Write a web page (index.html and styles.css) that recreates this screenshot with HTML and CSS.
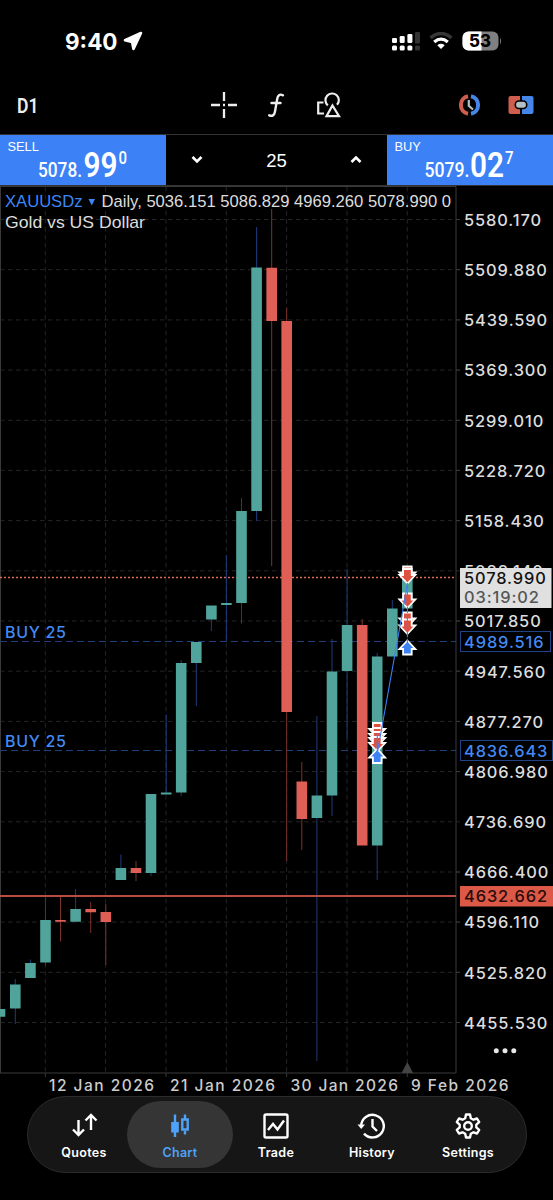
FILE: index.html
```html
<!DOCTYPE html>
<html lang="en">

<head>
    <meta charset="UTF-8">
    <meta name="viewport" content="width=device-width, initial-scale=1.0">
    <title>XAUUSDz Chart</title>
    <link rel="stylesheet" href="styles.css">
</head>

<body>
    <div class="app">
        <div class="status-bar">
            <span class="clock">9:40</span>
            <svg class="location" width="20" height="20" viewBox="0 0 20 20"><path d="M18 2 10.500 18 9 11 2 9.300Z" fill="#fff" stroke="#fff" stroke-width="2.600" stroke-linejoin="round"/></svg>
            <svg class="signal" width="29" height="20" viewBox="0 0 29 20">
                <g fill="#fff">
                    <rect x="0" y="7" width="5" height="5" rx="1.3"/><rect x="7.7" y="5" width="5" height="7" rx="1.3"/><rect x="15.4" y="3" width="5" height="9" rx="1.3"/>
                    <rect x="0" y="14.6" width="5" height="5" rx="1.5"/><rect x="7.7" y="14.6" width="5" height="5" rx="1.5"/><rect x="15.4" y="14.6" width="5" height="5" rx="1.5"/>
                </g>
                <g fill="#333"><rect x="23" y="1" width="5" height="11.500" rx="1.3"/><rect x="23" y="14.6" width="5" height="5" rx="1.5"/></g>
            </svg>
            <svg class="wifi" width="24" height="18" viewBox="0 0 24 18" fill="none">
                <path d="M1.500 5.900Q12-3 22.500 5.900" stroke="#363636" stroke-width="3.400"/>
                <path d="M5.200 10Q12 4.300 18.800 10" stroke="#fff" stroke-width="3.200"/>
                <path d="M8.300 13.200Q12 10.300 15.700 13.200L12 17Z" fill="#fff"/>
            </svg>
            <svg class="battery" width="40" height="20" viewBox="0 0 40 20">
                <rect x="0.500" y="0.500" width="36" height="19" rx="6" fill="#808080"/>
                <path d="M6.500 .5H19.500V19.500H6.500A6 6 0 0 1 .5 13.500V6.500A6 6 0 0 1 6.500 .5Z" fill="#fff"/>
                <path d="M38 6.500Q40 10 38 13.500Z" fill="#808080"/>
                <text x="7" y="16" class="battery-text" textLength="22" lengthAdjust="spacingAndGlyphs">53</text>
            </svg>
        </div>

        <div class="toolbar">
            <svg class="timeframe" width="24" height="26"><text x="0" y="20.500" textLength="21.500" lengthAdjust="spacingAndGlyphs">D1</text></svg>
            <svg class="crosshair" width="26" height="26" viewBox="0 0 26 26" stroke="#eee" stroke-width="2.300"><path d="M13 0V9M13 17V26M0 13H9M17 13H26M12 13h2"/></svg>
            <svg class="func" width="18" height="26" viewBox="0 0 18 26" fill="none" stroke="#eee" stroke-width="2.400" stroke-linecap="round"><path d="M16 3.300C12.500 1.600 10.800 3.500 10.200 7L8 19.500C7.300 23.500 5.200 24.500 2.200 23.300M4.500 11H13.500"/></svg>
            <svg class="shapes" width="24" height="26" viewBox="0 0 24 26" fill="none" stroke="#eee" stroke-width="2.200"><path d="M6.500 10.500H1.200V21.500H7M10.800 13.300A6.700 6.700 0 1 1 20 12.800M15.500 13.500 22 24.200H9.500Z"/></svg>
            <svg class="alarm" width="27" height="22" viewBox="0 0 27 22" fill="none">
                <path d="M12 2.200A9 9 0 0 0 12 19.800" stroke="#cf5e4f" stroke-width="4"/>
                <path d="M15 2.200A9 9 0 0 1 15 19.800" stroke="#4586e8" stroke-width="4"/>
                <path d="M12.800 6V11.800L17 15.500" stroke="#b5c0c4" stroke-width="2.200"/>
            </svg>
            <svg class="ticket" width="26" height="20" viewBox="0 0 26 20">
                <path d="M2.500 1H12V19H2.500Q.5 19 .5 17V3Q.5 1 2.500 1Z" fill="#cf5e4f"/>
                <path d="M14 1H23.500Q25.500 1 25.500 3V17Q25.500 19 23.500 19H14Z" fill="#4586e8"/>
                <rect x="7.300" y="6" width="11.400" height="7.500" rx="3.500" fill="#b5c0c4" stroke="#000" stroke-width="1.600"/>
            </svg>
        </div>

        <div class="trade-row">
            <div class="quote sell">
                <span>SELL</span>
                <svg width="166" height="50" class="digits">
                    <text x="38" y="42" class="small" textLength="44" lengthAdjust="spacingAndGlyphs">5078.</text>
                    <text x="83.500" y="42" class="big" textLength="34" lengthAdjust="spacingAndGlyphs">99</text>
                    <text x="118.500" y="28.500" class="pip" textLength="8.500" lengthAdjust="spacingAndGlyphs">0</text>
                </svg>
            </div>
            <div class="volume">
                <svg width="12" height="8" viewBox="0 0 12 8"><path d="M1.500 1 6 5.500 10.500 1"/></svg>
                <span>25</span>
                <svg width="12" height="8" viewBox="0 0 12 8"><path d="M1.500 6 6 1.500 10.500 6"/></svg>
            </div>
            <div class="quote buy">
                <span>BUY</span>
                <svg width="166" height="50" class="digits">
                    <text x="37.500" y="42" class="small" textLength="45" lengthAdjust="spacingAndGlyphs">5079.</text>
                    <text x="83" y="42" class="big" textLength="34" lengthAdjust="spacingAndGlyphs">02</text>
                    <text x="118" y="28.500" class="pip" textLength="8.500" lengthAdjust="spacingAndGlyphs">7</text>
                </svg>
            </div>
        </div>

        <svg class="chart" width="553" height="910" viewBox="0 186 553 910">
            <defs>
                <path id="down" d="M-4.300-7H4.300V-1H8L0 7.500-8-1H-4.300Z"/>
                <path id="up" d="M-4.300 7H4.300V1.500H8L0-7-8 1.500H-4.300Z"/>
            </defs>

            <!-- grid -->
            <path class="grid" d="M0 219.500H460M0 269.700H460M0 319.900H460M0 370.100H460M0 420.300H460M0 470.400H460M0 520.600H460M0 570.800H460M0 621H460M0 671.200H460M0 721.400H460M0 771.600H460M0 821.800H460M0 872H460M0 922.100H460M0 972.300H460M0 1022.500H460"/>
            <path class="grid" d="M45.300 187V1073M105.600 187V1073M166 187V1073M226.300 187V1073M286.600 187V1073M347 187V1073M407.300 187V1073"/>
            <path class="axis" d="M0 186.500H456V1073H0M.5 186V1073M456 219.500h4M456 269.700h4M456 319.900h4M456 370.100h4M456 420.300h4M456 470.400h4M456 520.600h4M456 621h4M456 671.200h4M456 721.400h4M456 771.600h4M456 872h4M456 922.100h4M456 972.300h4M456 1022.500h4M45.300 1073v4M166 1073v4M286.600 1073v4M407.300 1073v4"/>
            <path d="M407.300 1062 413 1073H401.600Z" fill="#444"/>

            <!-- order levels -->
            <path class="level" d="M0 641.500H456M0 750.500H456"/>
            <path class="bid" d="M0 577.500H456"/>

            <!-- candles -->
            <path class="wick-up" d="M15.300 979V1024M30.400 959.500V964M45.500 897V965.500M75.600 889V910M120.900 854.500V869M151 873V876M166.200 714.500V794M181.200 660V796M196.300 662V706M211.400 619V631M226.400 555V641M241.500 498V623.500M256.600 227V521M316.900 716V1061M332 639V816M347.100 569V739.500M377.200 653V880M392.300 600V609"/>
            <path class="wick-down" d="M60.500 896V941.500M90.700 902V933M105.800 904V965M136 861V881M271.700 209V566M286.700 308V861M301.800 762V850M362.200 619V626"/>
            <path class="body-up" d="M0 1009V1016.700M15.300 984.500V1008.500M30.400 963V978M45.500 920V962.500M75.600 909V921.700M120.900 868V880M151 794V873M166.200 792.600V794.400M181.200 663V792.500M196.300 642V663M211.400 605.500V619.500M226.400 603V605M241.500 511V603M256.600 267.500V511M316.900 795.500V818M332 671.500V795.500M347.100 625V671M377.200 656.500V845.500M392.300 608.500V656.500M407.300 572V608.500"/>
            <path class="body-down" d="M60.500 920V921.800M90.700 909V912.300M105.800 912V922M136 868V873M271.700 267.700V321M286.700 321V712M301.800 781.500V819M362.200 625V845.500"/>
            <path d="M0 896H456" stroke="#b94d43" stroke-width="2"/>

            <!-- deals -->
            <g class="deal-sell">
                <use href="#down" x="377.200" y="730"/><use href="#down" x="377.200" y="735"/><use href="#down" x="377.200" y="739"/><use href="#down" x="377.200" y="744"/>
                <use href="#down" x="407.400" y="573.500"/><use href="#down" x="407.400" y="576"/><use href="#down" x="407.400" y="600.500"/><use href="#down" x="407.400" y="619.500"/><use href="#down" x="407.400" y="626.500"/>
            </g>
            <g class="deal-buy">
                <use href="#up" x="377.200" y="756"/><use href="#up" x="407.400" y="647.500"/>
            </g>
            <path class="deal-line" d="M377.500 752 407.300 585M377.300 733V752"/>
            <path class="deal-line" d="M407.400 583V644" stroke-dasharray="6 2"/>

            <!-- price scale -->
            <g class="scale">
                <text x="464" y="225.800">5580.170</text>
                <text x="464" y="276">5509.880</text>
                <text x="464" y="326.200">5439.590</text>
                <text x="464" y="376.400">5369.300</text>
                <text x="464" y="426.600">5299.010</text>
                <text x="464" y="476.700">5228.720</text>
                <text x="464" y="526.900">5158.430</text>
                <text x="464" y="577.100">5088.140</text>
                <text x="464" y="627.300">5017.850</text>
                <text x="464" y="677.500">4947.560</text>
                <text x="464" y="727.700">4877.270</text>
                <text x="464" y="777.900">4806.980</text>
                <text x="464" y="828.100">4736.690</text>
                <text x="464" y="878.300">4666.400</text>
                <text x="464" y="928.400">4596.110</text>
                <text x="464" y="978.600">4525.820</text>
                <text x="464" y="1028.800">4455.530</text>
                <rect x="460" y="568" width="91.500" height="40" fill="#e0e0e0"/>
                <text x="464" y="583.900" class="dark">5078.990</text>
                <text x="464" y="602.500" class="timer">03:19:02</text>
                <rect x="460.500" y="631.500" width="90" height="20" class="tag"/>
                <text x="464" y="647.600" class="blue">4989.516</text>
                <rect x="460.500" y="740.500" width="92" height="20" class="tag"/>
                <text x="464" y="757" class="blue">4836.643</text>
                <rect x="460" y="886" width="93" height="20.500" fill="#dc5947"/>
                <text x="464" y="902.300" class="on-red">4632.662</text>
                <text x="5" y="637.600" class="blue order">BUY 25</text>
                <text x="5" y="746.800" class="blue order">BUY 25</text>
            </g>
            <g class="dates">
                <text x="49" y="1091" textLength="105">12 Jan 2026</text>
                <text x="170" y="1091" textLength="105">21 Jan 2026</text>
                <text x="290.500" y="1091" textLength="107.500">30 Jan 2026</text>
                <text x="411" y="1091" textLength="97.500">9 Feb 2026</text>
            </g>
            <g fill="#e8e8e8"><circle cx="496.300" cy="1050.700" r="2.500"/><circle cx="505" cy="1050.700" r="2.500"/><circle cx="513.800" cy="1050.700" r="2.500"/></g>

            <g class="symbol">
                <text x="5" y="207" class="name" textLength="77.500" lengthAdjust="spacingAndGlyphs">XAUUSDz</text>
                <path d="M88.500 199H95L91.800 205.500Z" fill="#3d86f7"/>
                <text x="101.500" y="207" textLength="349.500" lengthAdjust="spacingAndGlyphs">Daily, 5036.151 5086.829 4969.260 5078.990 0</text>
                <text x="5" y="228.300" textLength="140" lengthAdjust="spacingAndGlyphs">Gold vs US Dollar</text>
            </g>
        </svg>

        <nav class="tab-bar">
            <a class="tab">
                <svg width="28" height="28" viewBox="0 0 28 28"><path d="M8.500 8V23M3 17.500 8.500 23 14 17.500M21 18V3M15.500 8.500 21 3 26.500 8.500"/></svg>
                <span>Quotes</span>
            </a>
            <a class="tab active">
                <svg width="28" height="28" viewBox="0 0 28 28"><path d="M9 2.500V25M19 2.500V7M19 19V22.500"/><path d="M5.200 10H12.800V20.500H5.200Z" fill="currentColor" stroke="none"/><path d="M16.300 7.500H21.700V17.500H16.300Z"/></svg>
                <span>Chart</span>
            </a>
            <a class="tab">
                <svg width="28" height="28" viewBox="0 0 28 28"><rect x="2.500" y="2.500" width="23" height="23" rx="1.500"/><path d="M6 18 11 12 15.500 17.500 22 8.500"/></svg>
                <span>Trade</span>
            </a>
            <a class="tab">
                <svg width="28" height="28" viewBox="0 0 28 28"><path d="M3.200 14A11.300 11.300 0 1 1 6 21.600M14.500 7V14.500L19 19"/><path d="M-.5 12.500H7L3.200 17Z" fill="currentColor" stroke="none"/></svg>
                <span>History</span>
            </a>
            <a class="tab">
                <svg width="28" height="28" viewBox="0 0 28 28"><path d="M12 2.500H16L16.800 6.200 19.500 7.700 23 6.500 25.200 10.200 22.300 12.600V15.400L25.200 17.800 23 21.500 19.500 20.300 16.800 21.800 16 25.500H12L11.200 21.800 8.500 20.300 5 21.500 2.800 17.800 5.700 15.400V12.600L2.800 10.200 5 6.500 8.500 7.700 11.200 6.200Z" stroke-linejoin="round"/><circle cx="14" cy="14" r="3.800"/></svg>
                <span>Settings</span>
            </a>
        </nav>
    </div>
</body>

</html>
```
FILE: styles.css
```css
body {
    margin: 0;
    background-color: #000;
    color: #fff;
    font-family: Inter, sans-serif;
}

svg {
    display: block;
    flex: none;
}

.app {
    width: 553px;
    height: 1200px;
    overflow: hidden;
}

.status-bar {
    display: flex;
    align-items: center;
    height: 82px;
    box-sizing: border-box;
    padding-left: 65px;
}

.clock {
    width: 54px;
    font-size: 22.5px;
    font-weight: 700;
}

.location {
    margin-left: 4px;
}

.signal {
    margin-left: 249px;
}

.wifi {
    margin-left: 8px;
}

.battery {
    margin-left: 9px;
}

.battery-text {
    font-size: 17px;
    font-weight: 800;
}

.toolbar {
    display: flex;
    align-items: center;
    height: 46px;
    padding: 0 19px 6px 16.5px;
}

.timeframe {
    fill: #eee;
    font-family: Roboto, sans-serif;
    font-size: 21px;
    font-weight: 600;
}

.crosshair {
    margin-left: 170.5px;
}

.func {
    margin-left: 30px;
}

.shapes {
    margin-left: 32px;
}

.alarm {
    margin-left: auto;
}

.ticket {
    margin-left: 25px;
}

.trade-row {
    display: flex;
    height: 52px;
    box-sizing: border-box;
    border-top: 1px solid #333;
    border-bottom: 1px solid #333;
}

.quote {
    display: grid;
    width: 166px;
    background-color: #3c82f6;
    font-family: "Liberation Sans", Arial, sans-serif;
    font-size: 12.8px;
}

.quote span, .digits {
    grid-area: 1 / 1;
}

.quote span {
    padding: 4px 0 0 7.5px;
}

.digits {
    fill: #fff;
    font-family: Roboto, sans-serif;
    font-weight: 500;
}

.small {
    font-size: 19.5px;
}

.big {
    font-size: 35px;
    font-weight: 600;
}

.pip {
    font-size: 18.5px;
}

.volume {
    display: flex;
    flex: 1;
    align-items: center;
    justify-content: space-between;
    padding: 0 25px;
    font-family: "Liberation Sans", Arial, sans-serif;
    font-size: 18.5px;
}

.volume span {
    padding-top: 2px;
}

.volume path {
    fill: none;
    stroke: #fff;
    stroke-width: 2.6;
}

.grid {
    fill: none;
    stroke: #242428;
    stroke-dasharray: 4.5 3.5;
}

.axis {
    fill: none;
    stroke: #3a3a3a;
}

.level {
    stroke: #203e78;
    stroke-dasharray: 7 4;
}

.bid {
    stroke: #dc6a58;
    stroke-width: 1.3;
    stroke-dasharray: 2 2;
}

.wick-up {
    stroke: #1d3c7c;
}

.wick-down {
    stroke: #7b332b;
}

.body-up {
    stroke: #51a49b;
    stroke-width: 10.6;
}

.body-down {
    stroke: #df5f57;
    stroke-width: 10.6;
}

.deal-sell, .deal-buy {
    fill: #e0503f;
    stroke: #fff;
    stroke-width: 1.8;
}

.deal-buy {
    fill: #3c82f6;
}

.deal-line {
    fill: none;
    stroke: #3c82f6;
    stroke-width: 1.1;
}

.scale {
    fill: #ddd;
    font-size: 16.4px;
    font-weight: 550;
    letter-spacing: 0.9px;
}

.scale .dark {
    fill: #111;
}

.scale .timer {
    fill: #555;
}

.scale .on-red {
    fill: #280b07;
}

.scale .blue {
    fill: #4489f4;
}

.scale .order {
    font-size: 16px;
    letter-spacing: 0.7px;
}

.tag {
    fill: #000;
    stroke: #1f4384;
}

.dates {
    fill: #ccc;
    font-size: 15.5px;
    font-weight: 550;
}

.symbol {
    fill: #ddd;
    font-family: "Liberation Sans", Arial, sans-serif;
    font-size: 17px;
}

.symbol .name {
    fill: #3d86f7;
}

.tab-bar {
    display: flex;
    width: 500px;
    height: 77px;
    box-sizing: border-box;
    margin-left: 26.5px;
    padding: 4px 9.5px 4px 8.5px;
    border: 1px solid #2c2c2c;
    border-radius: 38.5px;
    background-color: #161616;
}

.tab {
    display: flex;
    flex: 1;
    flex-direction: column;
    align-items: center;
    margin: 0 -4.8px;
    padding-top: 11px;
    border-radius: 34px;
    font-size: 12.5px;
    font-weight: 600;
    letter-spacing: 0.3px;
}

.tab span {
    margin-top: 5px;
    line-height: 16px;
}

.tab svg {
    fill: none;
    stroke: currentColor;
    stroke-width: 2.4;
    overflow: visible;
}

.active {
    background-color: #353535;
    color: #4ea2f8;
}
```
